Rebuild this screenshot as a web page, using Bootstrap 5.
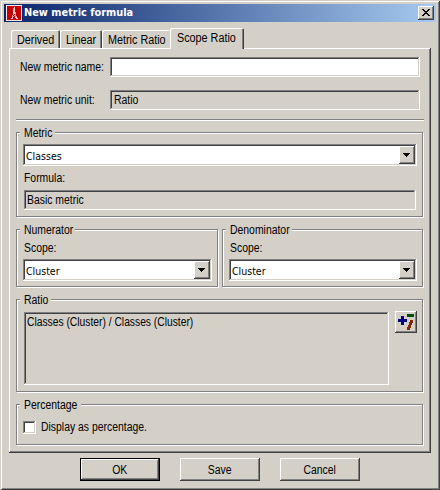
<!DOCTYPE html>
<html lang="en">
<head>
<meta charset="utf-8">
<title>New metric formula</title>
<link rel="stylesheet" href="https://cdn.jsdelivr.net/npm/bootstrap@5.3.0/dist/css/bootstrap.min.css">
<style>
:root{--face:#d4d0c8;--shade:#808080;--dark:#404040}
body{margin:0;background:var(--face);color:#000;font:12px/14px "Liberation Sans",Arial,sans-serif;overflow:hidden}
.win{width:440px;height:490px;padding:4px;box-shadow:inset 1px 1px var(--face),inset -1px -1px var(--dark),inset 2px 2px #fff,inset -2px -2px var(--shade)}
.titlebar{height:18px;padding:0 2px;background:linear-gradient(90deg,#0a246a,#a6caf0)}
.t{display:inline-block;white-space:nowrap;line-height:14px;transform:scaleX(.868);transform-origin:0 50%}
.t.mid{transform-origin:50% 50%}
.tab-b .t{transform:scaleX(.9)}
.t.expr{transform:scaleX(.857)}
.t.tah{font-family:"DejaVu Sans",sans-serif;font-size:11px;transform:scaleX(.86)}
.t.cap{color:#fff;font-weight:bold;transform:scaleX(.89);margin-left:2px}
.raised{background:var(--face);border:0;padding:0;border-radius:0;box-shadow:inset -1px -1px var(--dark),inset 1px 1px #fff,inset -2px -2px var(--shade)}
.sunken{border:0;border-radius:0;background:var(--face);box-shadow:inset -1px -1px #fff,inset 1px 1px var(--shade),inset -2px -2px var(--face),inset 2px 2px var(--dark)}
.close-b{width:16px;height:14px}
.tabs{height:26px;padding:6px 0 0 7px}
.tab-b{height:18px;margin-top:2px;border:0;background:var(--face);padding:3px 0 0 6px;border-radius:2px 2px 0 0;box-shadow:inset 1px 1px #fff,inset -1px 0 var(--dark),inset -2px 0 var(--shade)}
.tab-b.on{height:21px;margin-top:0;padding:3px 0 0 7px;z-index:1}
.tab-b.next-on{box-shadow:inset 1px 1px #fff}
.pane{width:422px;height:405px;margin-left:5px;padding:9px 7px 0;box-shadow:inset -1px -1px var(--dark),inset 1px 1px #fff,inset -2px -2px var(--shade)}
.line-f{height:20px;padding-left:4px}
.line-f .lab{width:90px}
.line-f .sunken{width:310px;height:20px;padding:3px 4px}
.rule{height:2px;background:linear-gradient(var(--shade) 50%,#fff 50%);margin:9px 0 0}
.grp{position:relative;border:1px solid var(--shade);box-shadow:1px 1px #fff,inset 1px 1px #fff;margin:0 1px 1px 0}
.grp>.leg{position:absolute;left:3px;top:-7px;height:14px;padding-left:4px;background:var(--face)}
.combo{height:22px;background:#fff;padding:2px;margin-left:6px}
.combo .raised{width:16px;height:18px}
.combo .t{margin:4px 0 0 1px}
.chk{width:13px;height:13px;background:#fff}
.chk + .t{margin-top:-1px}
.btn-w{width:80px;height:23px;color:#000}
.btn-w.def{box-shadow:inset 0 0 0 1px #000,inset -2px -2px var(--dark),inset 2px 2px #fff,inset -3px -3px var(--shade)}
svg{display:block}
</style>
<script src="https://cdn.jsdelivr.net/npm/bootstrap@5.3.0/dist/js/bootstrap.bundle.min.js"></script>
</head>
<body>
<div class="win">
  <div class="titlebar d-flex align-items-center">
    <svg width="16" height="16" shape-rendering="crispEdges"><path fill="#c80000" d="M0 0h16v16H0z"/><path fill="none" stroke="#fbe8e8" d="M.5.5h15v15H.5z"/><path fill="#f4d0d0" d="M8 2h1v3H8zM7 5h2v4H7zM6 12h1v1H6zM9 12h2v1H9zM5 13h2v1H5zM10 13h2v1h-2z"/><path fill="#e49a9a" d="M7 3h1v2H7zM9 7h1v5H9zM7 9h1v1H7zM8 10h1v1H8zM7 11h1v1H7zM6 10h1v2H6zM10 11h1v1h-1z"/></svg>
    <span class="t tah cap">New metric formula</span>
    <button class="raised close-b ms-auto" aria-label="Close"><svg width="16" height="14" shape-rendering="crispEdges"><path d="M4 3h2v1h1v1h2V4h1V3h2v1h-1v1h-1v1H9v1h1v1h1v1h1v1h-2V9H9V8H7v1H6v1H4V9h1V8h1V7h1V6H6V5H5V4H4z"/></svg></button>
  </div>
  <div class="tabs d-flex align-items-start">
    <div class="tab-b" style="width:49px"><span class="t">Derived</span></div>
    <div class="tab-b" style="width:42px"><span class="t">Linear</span></div>
    <div class="tab-b next-on" style="width:68px"><span class="t">Metric Ratio</span></div>
    <div class="tab-b on position-relative" style="width:74px"><span class="t">Scope Ratio</span></div>
  </div>
  <div class="pane">
    <div class="line-f d-flex align-items-center"><div class="lab"><span class="t">New metric name:</span></div><div class="sunken bg-white"></div></div>
    <div class="line-f d-flex align-items-center" style="margin-top:13px"><div class="lab"><span class="t">New metric unit:</span></div><div class="sunken"><span class="t">Ratio</span></div></div>
    <div class="rule"></div>

    <div class="grp" style="height:85px;margin-top:11px;padding-top:11px">
      <div class="leg" style="width:35px"><span class="t">Metric</span></div>
      <div class="combo sunken d-flex justify-content-between bg-white" style="width:394px"><span class="t tah">Classes</span><span class="raised"><svg width="16" height="18" shape-rendering="crispEdges"><path d="M4 7h7v1h-1v1H9v1H8v1H7v-1H6V9H5V8H4z"/></svg></span></div>
      <div style="margin:5px 0 0 7px;height:14px"><span class="t">Formula:</span></div>
      <div class="sunken" style="width:392px;height:20px;margin:5px 0 0 7px;padding:3px"><span class="t">Basic metric</span></div>
    </div>

    <div class="d-flex" style="margin-top:12px;gap:3px">
      <div class="grp" style="width:202px;height:58px;padding-top:11px">
        <div class="leg" style="width:55px"><span class="t">Numerator</span></div>
        <div style="margin-left:7px;height:18px"><span class="t">Scope:</span></div>
        <div class="combo sunken d-flex justify-content-between bg-white" style="width:189px"><span class="t tah">Cluster</span><span class="raised"><svg width="16" height="18" shape-rendering="crispEdges"><path d="M4 7h7v1h-1v1H9v1H8v1H7v-1H6V9H5V8H4z"/></svg></span></div>
      </div>
      <div class="grp" style="width:201px;height:58px;padding-top:11px">
        <div class="leg" style="width:66px"><span class="t">Denominator</span></div>
        <div style="margin-left:7px;height:18px"><span class="t">Scope:</span></div>
        <div class="combo sunken d-flex justify-content-between bg-white" style="width:188px"><span class="t tah">Cluster</span><span class="raised"><svg width="16" height="18" shape-rendering="crispEdges"><path d="M4 7h7v1h-1v1H9v1H8v1H7v-1H6V9H5V8H4z"/></svg></span></div>
      </div>
    </div>

    <div class="grp d-flex align-items-start" style="height:93px;margin-top:11px;padding:11px 0 0 7px">
      <div class="leg" style="width:31px"><span class="t">Ratio</span></div>
      <div class="sunken" style="width:365px;height:73px;margin-top:1px;padding:3px"><span class="t expr">Classes (Cluster) / Classes (Cluster)</span></div>
      <button class="raised" style="width:22px;height:22px;margin-left:6px" aria-label="Insert operator"><svg width="22" height="22" shape-rendering="crispEdges"><path fill="#000080" d="M6 5h3v3h3v3H9v3H6v-3H3V8h3z"/><path fill="#005000" d="M12 3h7v3h-7z"/><path fill="#802800" d="M15 9h3v3h-1v2h-1v3h-1v2h-3v-3h1v-2h1v-3h1z"/></svg></button>
    </div>

    <div class="grp" style="height:41px;margin-top:12px;padding:16px 0 0 6px">
      <div class="leg" style="width:61px"><span class="t">Percentage</span></div>
      <div class="d-flex" style="gap:5px"><span class="sunken chk bg-white"></span><span class="t">Display as percentage.</span></div>
    </div>
  </div>
  <div class="d-flex justify-content-center" style="gap:20px;margin-top:5px">
    <button class="raised btn-w def"><span class="t mid">OK</span></button>
    <button class="raised btn-w"><span class="t mid">Save</span></button>
    <button class="raised btn-w"><span class="t mid">Cancel</span></button>
  </div>
</div>
</body>
</html>
